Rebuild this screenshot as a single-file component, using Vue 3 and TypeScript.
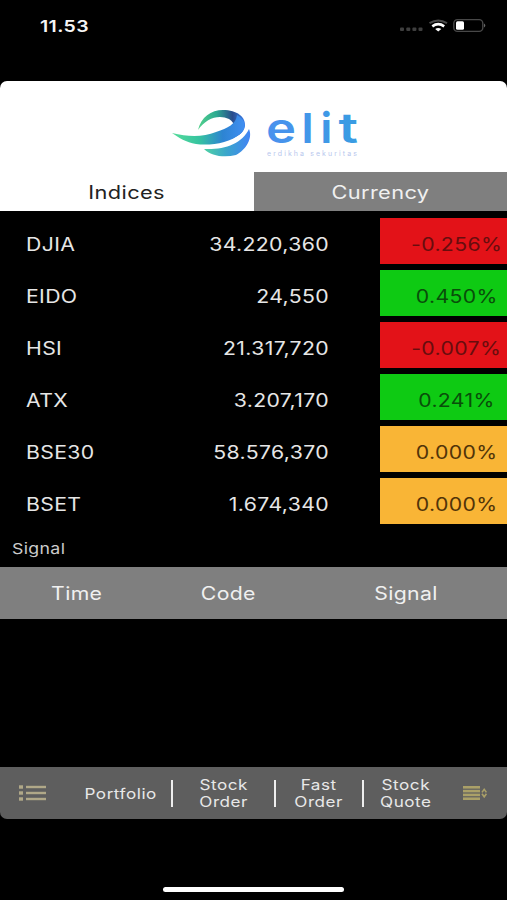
<script setup lang="ts">
type Trend = 'down' | 'up' | 'flat'
interface IndexRow {
  code: string
  value: string
  change: string
  trend: Trend
}

const rows: IndexRow[] = [
  { code: 'DJIA', value: '34.220,360', change: '-0.256%', trend: 'down' },
  { code: 'EIDO', value: '24,550', change: '0.450%', trend: 'up' },
  { code: 'HSI', value: '21.317,720', change: '-0.007%', trend: 'down' },
  { code: 'ATX', value: '3.207,170', change: '0.241%', trend: 'up' },
  { code: 'BSE30', value: '58.576,370', change: '0.000%', trend: 'flat' },
  { code: 'BSET', value: '1.674,340', change: '0.000%', trend: 'flat' },
]
</script>

<template>
  <div class="screen">
    <header class="status">
      <span class="clock wide">11.53</span>
      <svg class="status-icons" width="90" height="20" viewBox="0 0 90 20">
        <g fill="#3f3f3f">
          <rect x="2" y="12.4" width="4" height="3.6" rx="1" />
          <rect x="8.3" y="12.4" width="4" height="3.6" rx="1" />
          <rect x="14.4" y="12.4" width="4" height="3.6" rx="1" />
          <rect x="20.5" y="12.4" width="4" height="3.6" rx="1" />
        </g>
        <path d="M31.5 8.2Q40.2 2.8 49 8.2" fill="none" stroke="#4a4a4a" stroke-width="2" />
        <path d="M34.3 11.4Q40.2 7 46.2 11.4" fill="none" stroke="#fff" stroke-width="2.6" />
        <path d="M37.2 14Q40.2 12 43.3 14L40.2 16.6Z" fill="#fff" />
        <rect x="55.8" y="4.6" width="29" height="11.8" rx="3.6" fill="none" stroke="#484848" stroke-width="1.4" />
        <rect x="58" y="6.2" width="8" height="8.6" rx="1.5" fill="#fff" />
        <path d="M86 8.4Q88.7 10.5 86 12.5Z" fill="#666" />
      </svg>
    </header>

    <section class="brand">
      <svg class="logo" width="210" height="75" viewBox="0 0 210 75">
        <defs>
          <linearGradient id="swoosh" x1="12" y1="0" x2="90" y2="0" gradientUnits="userSpaceOnUse">
            <stop offset="0" stop-color="#56dc9a" />
            <stop offset=".35" stop-color="#35c3a0" />
            <stop offset=".65" stop-color="#2d84d2" />
            <stop offset="1" stop-color="#4591fa" />
          </linearGradient>
          <linearGradient id="crest" x1="38" y1="30" x2="84" y2="30" gradientUnits="userSpaceOnUse">
            <stop offset="0" stop-color="#54d28c" />
            <stop offset=".4" stop-color="#2caa91" />
            <stop offset=".75" stop-color="#294c8c" />
            <stop offset="1" stop-color="#397ce6" />
          </linearGradient>
          <linearGradient id="hull" x1="44" y1="0" x2="90" y2="0" gradientUnits="userSpaceOnUse">
            <stop offset="0" stop-color="#4fd2a4" />
            <stop offset=".5" stop-color="#3aa5cc" />
            <stop offset="1" stop-color="#4284f4" />
          </linearGradient>
          <linearGradient id="word" x1="106" y1="0" x2="198" y2="0" gradientUnits="userSpaceOnUse">
            <stop offset="0" stop-color="#4a91ee" />
            <stop offset="1" stop-color="#399ce2" />
          </linearGradient>
        </defs>
        <path d="M38 35C41 22 51 15 63 15C77 15 86 22 85 31C84 38 77 42 70 44C76 37 76 28 69 24C59 19 46 23 38 35Z" fill="url(#crest)" />
        <path d="M12 38C29 42 43 42 56 37C68 33 76 29 77 20C86 25 87 33 80 39C70 48 50 51 36 49C26 47 19 43 12 38Z" fill="url(#swoosh)" />
        <path d="M44 54C64 55 82 49 89 34C93 43 86 55 76 60C64 63 51 61 44 54Z" fill="url(#hull)" />
        <g fill="url(#word)" font-family="Inter, sans-serif" font-size="41">
          <text x="106" y="47.7" font-weight="600" textLength="30" lengthAdjust="spacingAndGlyphs">e</text>
          <text x="142" y="47.7" font-weight="700">l</text>
          <text x="160.8" y="47.7" font-weight="700">i</text>
          <text x="178.5" y="47.7" font-weight="600" textLength="19.5" lengthAdjust="spacingAndGlyphs">t</text>
        </g>
        <text class="tagline" x="107" y="60.5" textLength="90">erdikha sekuritas</text>
      </svg>
    </section>

    <nav class="tabs">
      <div class="tab active"><span class="wide">Indices</span></div>
      <div class="tab"><span class="wide">Currency</span></div>
    </nav>

    <main class="indices">
      <div v-for="row in rows" :key="row.code" class="row">
        <span class="code wide">{{ row.code }}</span>
        <span class="value wide">{{ row.value }}</span>
        <span class="change" :class="row.trend"><span class="wide">{{ row.change }}</span></span>
      </div>
    </main>

    <h2 class="caption"><span class="wide">Signal</span></h2>
    <div class="signal-head">
      <span class="wide">Time</span>
      <span class="wide">Code</span>
      <span class="wide">Signal</span>
    </div>
    <div class="signal-body"></div>

    <footer class="bar">
      <svg class="menu" width="30" height="18" viewBox="0 0 30 18">
        <g fill="#b0a888">
          <rect x="1" y="1.3" width="4" height="3.4" />
          <rect x="1" y="7.3" width="4" height="3.4" />
          <rect x="1" y="13.3" width="4" height="3.4" />
          <rect x="8" y="1.8" width="20" height="2.4" />
          <rect x="8" y="7.8" width="20" height="2.4" />
          <rect x="8" y="13.8" width="20" height="2.4" />
        </g>
      </svg>
      <span class="item portfolio"><span class="wide">Portfolio</span></span>
      <i class="divider"></i>
      <span class="item stock"><span class="wide">Stock<br />Order</span></span>
      <i class="divider thin"></i>
      <span class="item fast"><span class="wide">Fast<br />Order</span></span>
      <i class="divider"></i>
      <span class="item quote"><span class="wide">Stock<br />Quote</span></span>
      <svg class="sort" width="26" height="18" viewBox="0 0 26 18">
        <g fill="#aaa068">
          <rect x="1" y="2" width="17" height="2.6" />
          <rect x="1" y="5.8" width="17" height="2.6" />
          <rect x="1" y="9.6" width="17" height="2.6" />
          <rect x="1" y="13.4" width="17" height="2.6" />
        </g>
        <path d="M20 8.4L22.2 5.4L24.4 8.4M20 9.8L22.2 12.8L24.4 9.8" fill="none" stroke="#aaa068" stroke-width="1.6" />
      </svg>
    </footer>
    <div class="home"><i></i></div>
  </div>
</template>

<style>
body {
  background: #000;
}
</style>

<style scoped>
.screen {
  width: 507px;
  height: 900px;
  overflow: hidden;
  display: flex;
  flex-direction: column;
  background: #000;
  color: #e6e6e6;
  font: 400 18px/22px Inter, "Liberation Sans", sans-serif;
}
.wide {
  display: inline-block;
  transform: scaleX(1.18);
  letter-spacing: 0.3px;
  white-space: nowrap;
}
.status {
  flex: none;
  height: 81px;
  display: flex;
  justify-content: space-between;
  padding: 15px 19px 0 40px;
  box-sizing: border-box;
}
.clock {
  font-size: 16.5px;
  font-weight: 600;
  color: #f5f5f5;
  transform-origin: left;
}
.brand {
  flex: none;
  height: 91px;
  background: #fff;
  border-radius: 7px 7px 0 0;
  padding: 14px 0 0 160px;
  box-sizing: border-box;
}
.logo {
  display: block;
}
.tagline {
  font-family: Inter, sans-serif;
  font-size: 7px;
  fill: #b8c7ee;
}
.tabs {
  flex: none;
  height: 39px;
  display: grid;
  grid-template-columns: 254px 253px;
  background: #fff;
}
.tab {
  display: flex;
  align-items: center;
  justify-content: center;
  background: #7f7f7f;
  color: #f0f0f0;
  padding-top: 2px;
  box-sizing: border-box;
}
.tab .wide {
  transform: scaleX(1.21);
}
.tab.active {
  background: #fff;
  color: #222;
}
.indices {
  flex: none;
  padding-top: 7px;
  height: 318.5px;
  box-sizing: border-box;
}
.row {
  height: 52px;
  display: grid;
  grid-template-columns: 126px 203px 51px 127px;
}
.code {
  margin: 16px 0 0 26px;
  transform-origin: left;
  height: 22px;
}
.value {
  margin-top: 16px;
  text-align: right;
  transform-origin: right;
  height: 22px;
}
.change {
  grid-column: 4;
  height: 45.5px;
  padding: 16px 0 0 26px;
  box-sizing: border-box;
  text-align: center;
}
.down {
  background: #e31218;
  color: #680d0e;
}
.up {
  background: #0eca13;
  color: #094e0a;
}
.flat {
  background: #f9b536;
  color: #513409;
}
.caption {
  flex: none;
  height: 37.5px;
  margin: 0;
  padding: 8px 0 0 11.5px;
  box-sizing: border-box;
  font-size: 15px;
  font-weight: 400;
  color: #ccc;
}
.caption .wide {
  transform-origin: left;
}
.signal-head {
  flex: none;
  height: 52px;
  display: grid;
  grid-template-columns: 153px 151px 203px;
  align-items: center;
  justify-items: center;
  padding-top: 2px;
  box-sizing: border-box;
  background: #7f7f7f;
  color: #f0f0f0;
}
.signal-body {
  flex: none;
  height: 148px;
}
.bar {
  flex: none;
  height: 52px;
  display: flex;
  align-items: center;
  background: #5e5e5e;
  border-radius: 0 0 7px 7px;
  color: #e8e8e8;
  font-size: 14.5px;
  line-height: 17px;
}
.menu {
  flex: none;
  margin: 0 0 0 18px;
}
.item {
  flex: none;
  display: flex;
  justify-content: center;
  text-align: center;
}
.item .wide {
  letter-spacing: 0.45px;
}
.portfolio {
  width: 100px;
  margin: 0 0 0 23px;
}
.stock {
  width: 101px;
}
.fast {
  width: 86px;
}
.quote {
  width: 84px;
}
.divider {
  flex: none;
  width: 2px;
  height: 27px;
  background: #eee;
}
.divider.thin {
  width: 1.5px;
}
.sort {
  flex: none;
  margin-left: 14px;
}
.home {
  flex: 1;
  display: flex;
  justify-content: center;
  padding-top: 68px;
}
.home i {
  width: 181px;
  height: 5px;
  border-radius: 3px;
  background: #fff;
}
</style>
